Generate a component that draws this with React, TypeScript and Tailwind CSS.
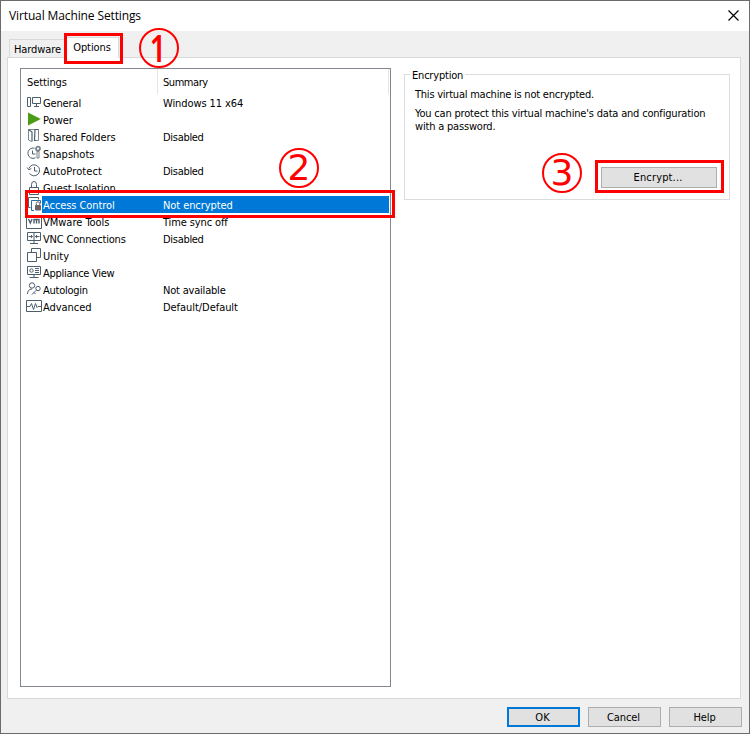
import React from "react";

type Row = {
  name: string;
  nameClass?: string;
  summary?: string;
  summaryClass?: string;
  icon: React.ReactNode;
  selected?: boolean;
};

const rows: Row[] = [
  {
    name: "General",
    nameClass: "tracking-[-0.14px]",
    summary: "Windows 11 x64",
    summaryClass: "tracking-[-0.1px]",
    icon: (
      <>
        <path d="M1.5 3.5h3v9h-3z" />
        <path d="M6.5 3.5h8v6h-8zM10.5 9.5v3M8 12.5h5" />
      </>
    ),
  },
  {
    name: "Power",
    icon: <path d="M2 1.5v13L14.8 8z" fill="#4a9b15" stroke="none" />,
  },
  {
    name: "Shared Folders",
    nameClass: "tracking-[-0.07px]",
    summary: "Disabled",
    summaryClass: "tracking-[-0.3px]",
    icon: (
      <>
        <path d="M2.5 1.5h10v11h-2M2.5 1.5v10.500l3 1.5" stroke="#7b8790" />
        <path d="M2.5 1.5L6 4v9.500M12.500 1.500H9L8.500 12.500h2" strokeWidth="1.2" />
      </>
    ),
  },
  {
    name: "Snapshots",
    icon: (
      <>
        <path d="M8.5 3.2A5.2 5.2 0 1 0 9.5 12.8" />
        <path d="M6.5 5.5V9h3" />
        <circle cx="12" cy="3.7" r="2" strokeWidth="1.8" stroke="#77838c" />
        <path d="M11 6.5h2V13h-2z" stroke="#77838c" />
      </>
    ),
  },
  {
    name: "AutoProtect",
    nameClass: "tracking-[0.1px]",
    summary: "Disabled",
    summaryClass: "tracking-[-0.3px]",
    icon: (
      <>
        <path d="M3 6.3a5.5 5.5 0 1 1 .5 5" />
        <path d="M8.5 5v4h3M1.2 5.5l1.6 2.3 2.5-1.3" />
      </>
    ),
  },
  {
    name: "Guest Isolation",
    nameClass: "tracking-[-0.1px]",
    icon: (
      <>
        <path d="M3.5 8.5h9v7h-9z" />
        <path d="M5.5 8.5v-3a2.5 3 0 0 1 5 0v3" />
      </>
    ),
  },
  {
    name: "Access Control",
    nameClass: "tracking-[-0.07px]",
    summary: "Not encrypted",
    summaryClass: "tracking-[-0.08px]",
    selected: true,
    icon: (
      <>
        <path d="M4.5 11.5h-2v-10h10v2" />
        <path d="M8 14.5H5.500v-10h9v3" stroke="#2f6f9f" />
        <path d="M9.5 9.5h5V14h-5z" fill="#6e6268" stroke="#6e6268" />
        <path d="M10.3 9V7.500a1.7 1.7 0 0 1 3.400 0V9" stroke="#6e6268" />
      </>
    ),
  },
  {
    name: "VMware Tools",
    nameClass: "tracking-[-0.02px]",
    summary: "Time sync off",
    summaryClass: "tracking-[-0.12px]",
    icon: (
      <>
        <path d="M.5 2.5h15v13H.5z" />
        <path d="M2.500 6l1.800 4L6.100 6M8 10.500V6.500h5v4M10.500 6.500v4" strokeWidth="1.4" />
      </>
    ),
  },
  {
    name: "VNC Connections",
    nameClass: "tracking-[-0.18px]",
    summary: "Disabled",
    summaryClass: "tracking-[-0.3px]",
    icon: (
      <>
        <path d="M1.5 2.5h13v8h-13zM8 2.5v11M4 13.5h8" />
        <path d="M2.5 6.5h4M5 5l1.5 1.5L5 8M13.5 6.5h-4M11 5L9.5 6.5 11 8" />
      </>
    ),
  },
  {
    name: "Unity",
    icon: (
      <>
        <path d="M1.5 5.5h9v9h-9z" />
        <path d="M5.5 5.5v-4h9v9h-4" />
      </>
    ),
  },
  {
    name: "Appliance View",
    nameClass: "tracking-[-0.28px]",
    icon: (
      <>
        <path d="M1.5 2.5h13v8h-13zM8 10.5v3M3.5 13.5h9" />
        <circle cx="5.5" cy="6.5" r="1.7" />
        <path d="M9 4.5h4M9 6.5h4M9 8.5h4" />
      </>
    ),
  },
  {
    name: "Autologin",
    nameClass: "tracking-[-0.25px]",
    summary: "Not available",
    summaryClass: "tracking-[-0.2px]",
    icon: (
      <>
        <circle cx="6" cy="4.5" r="2.7" />
        <path d="M1.5 13c0-3 1.500-5 4.500-5" />
        <circle cx="12" cy="7.5" r="2.2" />
        <path d="M10.3 9.2L6 13.5M8 11.5L9.5 13" />
      </>
    ),
  },
  {
    name: "Advanced",
    nameClass: "tracking-[-0.05px]",
    summary: "Default/Default",
    summaryClass: "tracking-[-0.05px]",
    icon: (
      <>
        <path d="M.5 2.5h15v11H.5z" />
        <path d="M1 8.5h3l1.5-3 2 6 2-6 1.5 4 1-1h3" />
      </>
    ),
  },
];

function SettingsRow({ row }: { row: Row }) {
  return (
    <div className="flex h-[17px] pl-[5px]">
      <svg
        width="16"
        height="16"
        viewBox="0 0 16 16"
        fill="none"
        stroke="#4d5f6c"
        className="shrink-0"
      >
        {row.icon}
      </svg>
      <div
        className={`mr-px flex grow items-center pt-[2px] ${
          row.selected ? "bg-[#0078d7] text-white" : ""
        }`}
      >
        <span className={`w-[121px] pl-px ${row.nameClass ?? ""}`}>{row.name}</span>
        <span className={row.summaryClass}>{row.summary}</span>
      </div>
    </div>
  );
}

function Button({ label, className }: { label: string; className: string }) {
  return (
    <button
      className={`flex items-center justify-center bg-[#e1e1e1] ${className}`}
    >
      {label}
    </button>
  );
}

function Marker({
  digit,
  className,
  digitClass = "",
}: {
  digit: string;
  className: string;
  digitClass?: string;
}) {
  return (
    <div
      className={`absolute flex size-10 items-center justify-center rounded-full border-2 border-[#ff0000] font-['DejaVu_Sans',sans-serif] text-[36px] leading-none text-[#ff0000] ${className}`}
    >
      <span className={digitClass}>{digit}</span>
    </div>
  );
}

export default function App() {
  return (
    <div className="relative flex h-[734px] w-[750px] flex-col border border-[#6b6b6b] bg-[#f0f0f0] font-['DejaVu_Sans_Condensed','DejaVu_Sans',sans-serif] text-[11px] leading-[13px] whitespace-nowrap text-black">
      {/* Title bar */}
      <div className="flex h-[30px] items-center justify-between bg-white pr-[10px] pl-2">
        <span className="-mt-[2px] font-['Open_Sans','Noto_Sans',sans-serif] text-[12px] tracking-[-0.12px]">
          Virtual Machine Settings
        </span>
        <svg
          width="11"
          height="11"
          viewBox="0 0 11 11"
          stroke="#000"
          strokeWidth="1.2"
          className="-mt-[2px]"
        >
          <path d="M.5 .5l10 10M10.5 .5l-10 10" />
        </svg>
      </div>

      {/* Tabs */}
      <div className="flex h-[26px] items-end pl-2">
        <div className="flex h-[18px] w-[56px] items-center border border-b-0 border-[#d9d9d9] pt-px pl-1 tracking-[-0.1px]">
          Hardware
        </div>
        <div className="z-10 -mb-px flex h-[21px] w-[54px] items-center justify-center border border-b-0 border-[#d9d9d9] bg-white pb-[2px] tracking-[-0.1px]">
          Options
        </div>
      </div>

      {/* Tab page */}
      <div className="ml-[6px] flex h-[642px] w-[734px] border border-[#d9d9d9] bg-white pt-[10px] pl-3">
        <div className="h-[619px] w-[371px] shrink-0 border border-[#828790]">
          <div className="flex h-[25px]">
            <div className="flex w-[137px] items-center border-r border-[#e5e5e5] pt-[2px] pl-[6px] tracking-[-0.1px]">
              Settings
            </div>
            <div className="mr-px flex grow items-center border-r border-[#e5e5e5] pt-[2px] pl-[5px] tracking-[-0.45px]">
              Summary
            </div>
          </div>
          {rows.map((row) => (
            <SettingsRow key={row.name} row={row} />
          ))}
        </div>

        <fieldset className="ml-[13px] flex h-[132px] w-[326px] flex-col border border-[#dcdcdc] pr-[12px] pl-[10px]">
          <legend className="-ml-[5px] px-[2px] tracking-[-0.2px]">
            <span className="relative top-px">Encryption</span>
          </legend>
          <p className="mt-[7px] tracking-[-0.23px]">
            This virtual machine is not encrypted.
          </p>
          <p className="mt-[6px] tracking-[-0.19px]">
            You can protect this virtual machine's data and configuration
            <br />
            with a password.
          </p>
          <Button
            label="Encrypt..."
            className="mt-[34px] h-[21px] w-[116px] self-end border border-[#adadad] pr-[2px] tracking-[0.15px]"
          />
        </fieldset>
      </div>

      {/* Dialog buttons */}
      <div className="mt-2 flex justify-end gap-2 pr-[7px]">
        <Button
          label="OK"
          className="h-5 w-[73px] border-2 border-[#0078d7] pr-[2px]"
        />
        <Button
          label="Cancel"
          className="h-5 w-[73px] border border-[#adadad] pr-[2px] tracking-[-0.1px]"
        />
        <Button
          label="Help"
          className="h-5 w-[73px] border border-[#adadad] pr-[2px] tracking-[-0.1px]"
        />
      </div>

      {/* Step callouts over the dialog */}
      <div className="absolute top-8 left-[63px] z-20 h-[31px] w-[59px] border-3 border-[#ff0000]" />
      <div className="absolute top-[189px] left-6 z-20 h-[28px] w-[370px] border-3 border-[#ff0000]" />
      <div className="absolute top-[159px] left-[594px] z-20 h-[33px] w-[129px] border-3 border-[#ff0000]" />
      <Marker
        digit="1"
        className="top-[27px] left-[138px]"
        digitClass="-mt-[3px] -ml-[3px] scale-x-75 font-['Noto_Sans',sans-serif] text-[38px] font-semibold"
      />
      <Marker digit="2" className="top-[147px] left-[278px]" />
      <Marker digit="3" className="top-[152px] left-[541px]" />
    </div>
  );
}
